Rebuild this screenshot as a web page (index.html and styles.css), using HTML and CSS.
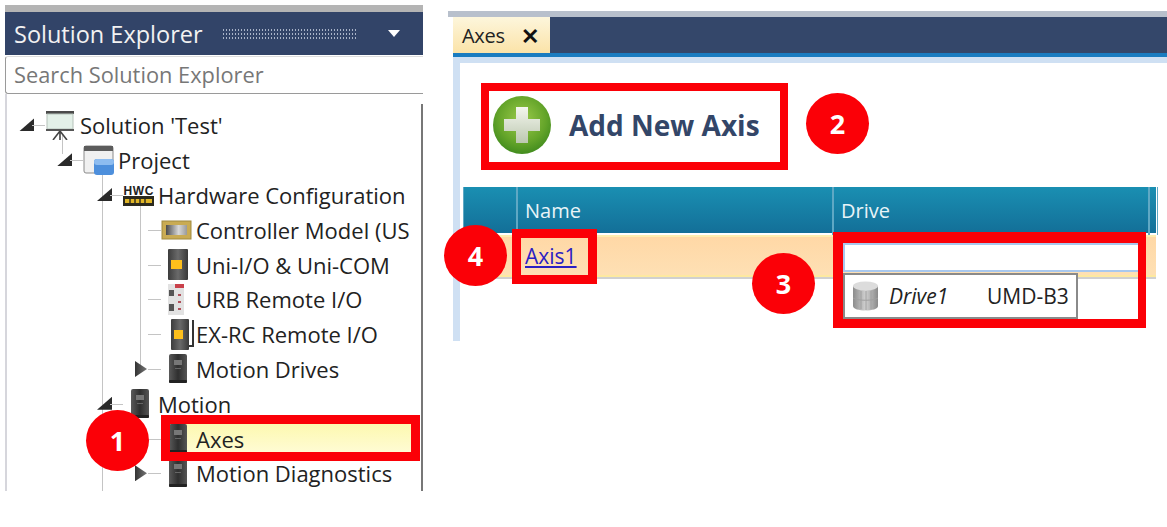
FILE: index.html
```html
<!DOCTYPE html>
<html lang="en">
<head>
  <meta charset="UTF-8" />
  <meta name="viewport" content="width=device-width, initial-scale=1.0" />
  <title>Add New Axis</title>
  <link rel="stylesheet" href="styles.css">
</head>
<body>
  <svg class="defs" width="0" height="0">
    <defs>
      <linearGradient id="driveBody" x1="0" x2="1" y1="0" y2="0">
        <stop offset="0" stop-color="#5a5a5a" />
        <stop offset="0.5" stop-color="#2f2f2f" />
        <stop offset="1" stop-color="#555" />
      </linearGradient>
      <linearGradient id="ioBody" x1="0" x2="1" y1="0" y2="0">
        <stop offset="0" stop-color="#3c3c3c" />
        <stop offset="0.5" stop-color="#6a6a6a" />
        <stop offset="1" stop-color="#383838" />
      </linearGradient>
      <linearGradient id="ctrlBody" x1="0" x2="1" y1="0" y2="0">
        <stop offset="0" stop-color="#4a4a4a" />
        <stop offset="0.6" stop-color="#d8d8d8" />
        <stop offset="1" stop-color="#9a9a9a" />
      </linearGradient>
      <linearGradient id="cylBody" x1="0" x2="1" y1="0" y2="0">
        <stop offset="0" stop-color="#8c8c8c" />
        <stop offset="0.5" stop-color="#d0d0d0" />
        <stop offset="1" stop-color="#8a8a8a" />
      </linearGradient>
      <radialGradient id="plusBall" cx="0.5" cy="0.4" r="0.62">
        <stop offset="0" stop-color="#9ccb4a" />
        <stop offset="0.65" stop-color="#65a52a" />
        <stop offset="1" stop-color="#3f8a1d" />
      </radialGradient>
      <linearGradient id="plusMark" x1="0" x2="0" y1="0" y2="1">
        <stop offset="0" stop-color="#f4f6ee" />
        <stop offset="1" stop-color="#bcc8b0" />
      </linearGradient>
      <symbol id="drive" viewBox="0 0 20 30">
        <rect x="1" y="0" width="18" height="29" rx="2" fill="url(#driveBody)" />
        <rect x="1" y="26" width="18" height="3" rx="1" fill="#222" />
        <rect x="6" y="6" width="8" height="5" fill="#777" />
        <rect x="7" y="14" width="6" height="1" fill="#666" />
      </symbol>
      <symbol id="unio" viewBox="0 0 20 31">
        <rect x="0" y="0" width="20" height="31" rx="1" fill="url(#ioBody)" />
        <rect x="3" y="11" width="11" height="9" fill="#fdbf1c" />
      </symbol>
    </defs>
  </svg>

  <div class="page">
    <section class="explorer">
      <div class="explorer-title">
        <span class="explorer-name">Solution Explorer</span>
        <span class="gripper"></span>
        <span class="caret"></span>
      </div>
      <div class="search">Search Solution Explorer</div>
      <ul class="tree">
        <li class="guide guide-a"></li>
        <li class="guide guide-b"></li>
        <li class="guide guide-c"></li>
        <li class="row level-0">
          <span class="exp open"></span>
          <span class="ico">
            <svg width="30" height="30" viewBox="0 0 30 30">
              <rect x="1" y="1" width="28" height="3" fill="#4a4a4a" />
              <rect x="2" y="4" width="26" height="15" fill="#e3f0e8" stroke="#b5c2ba" />
              <rect x="1" y="19" width="28" height="2" fill="#555" />
              <path d="M15 21 L8 30 M15 21 V30 M15 21 L22 30" stroke="#444" stroke-width="1.6" fill="none" />
            </svg>
          </span>
          <span class="label">Solution 'Test'</span>
        </li>
        <li class="row level-1">
          <span class="exp open"></span>
          <span class="ico">
            <svg width="31" height="30" viewBox="0 0 31 30">
              <rect x="1" y="1" width="29" height="27" rx="2" fill="#f0f0f0" stroke="#8a8a8a" />
              <rect x="1" y="1" width="29" height="5" fill="#5c5c5c" />
              <rect x="11" y="14" width="20" height="16" rx="3" fill="#4d8fdc" />
              <rect x="11" y="14" width="20" height="6" rx="3" fill="#8dbcf0" />
            </svg>
          </span>
          <span class="label">Project</span>
        </li>
        <li class="row level-2">
          <span class="exp open"></span>
          <span class="ico">
            <svg width="31" height="22" viewBox="0 0 31 22">
              <text class="hwc-text" x="15.5" y="11" text-anchor="middle" textLength="30">HWC</text>
              <rect x="0" y="12" width="31" height="10" fill="#2c2a1e" />
              <path d="M2 15h27v4H2z" fill="#e0b526" />
              <path d="M7 15v4M12 15v4M17 15v4M22 15v4" stroke="#2c2a1e" stroke-width="1.4" />
            </svg>
          </span>
          <span class="label">Hardware Configuration</span>
        </li>
        <li class="row level-3">
          <span class="exp"></span>
          <span class="ico">
            <svg width="31" height="20" viewBox="0 0 31 20">
              <rect x="1" y="1" width="29" height="18" fill="#c9ab53" stroke="#a08a40" />
              <rect x="5" y="5" width="21" height="10" fill="url(#ctrlBody)" />
            </svg>
          </span>
          <span class="label">Controller Model (US</span>
        </li>
        <li class="row level-3">
          <span class="exp"></span>
          <span class="ico ico-narrow"><svg width="20" height="31"><use href="#unio" /></svg></span>
          <span class="label">Uni-I/O &amp; Uni-COM</span>
        </li>
        <li class="row level-3">
          <span class="exp"></span>
          <span class="ico ico-narrow">
            <svg width="16" height="31" viewBox="0 0 16 31">
              <rect x="0" y="0" width="16" height="31" fill="#e2e2e2" />
              <path d="M7 0h9v4H7z" fill="#c9404a" />
              <rect x="1" y="6" width="5" height="6" fill="#555" />
              <rect x="1" y="20" width="5" height="7" fill="#555" />
              <path d="M10 10h3v2h-3zM10 17h3v2h-3zM10 24h3v2h-3z" fill="#b0505a" />
            </svg>
          </span>
          <span class="label">URB Remote I/O</span>
        </li>
        <li class="row level-3">
          <span class="exp"></span>
          <span class="ico ico-exrc">
            <svg width="24" height="31" viewBox="0 0 24 31">
              <rect x="0" y="0" width="18" height="31" rx="1" fill="url(#ioBody)" />
              <rect x="3" y="11" width="9" height="9" fill="#fdbf1c" />
              <path d="M22 1v26h-4" stroke="#333" stroke-width="2" fill="none" />
            </svg>
          </span>
          <span class="label">EX-RC Remote I/O</span>
        </li>
        <li class="row level-3">
          <span class="exp closed"></span>
          <span class="ico ico-narrow"><svg width="20" height="30"><use href="#drive" /></svg></span>
          <span class="label">Motion Drives</span>
        </li>
        <li class="row level-2">
          <span class="exp open"></span>
          <span class="ico ico-narrow"><svg width="20" height="30"><use href="#drive" /></svg></span>
          <span class="label">Motion</span>
        </li>
        <li class="row level-3 selected">
          <span class="exp"></span>
          <span class="sel">
            <span class="ico ico-narrow"><svg width="20" height="30"><use href="#drive" /></svg></span>
            <span class="label">Axes</span>
          </span>
        </li>
        <li class="row level-3">
          <span class="exp closed"></span>
          <span class="ico ico-narrow"><svg width="20" height="30"><use href="#drive" /></svg></span>
          <span class="label">Motion Diagnostics</span>
        </li>
      </ul>
    </section>

    <section class="editor">
      <div class="tabbar">
        <div class="tab"><span>Axes</span><span class="tab-close">✕</span></div>
      </div>
      <div class="editor-body">
        <div class="toolbar">
          <svg width="58" height="58" viewBox="0 0 58 58">
            <circle cx="29" cy="29" r="29" fill="url(#plusBall)" />
            <path d="M23 11h12v12h12v12H35v12H23V35H11V23h12z" fill="url(#plusMark)" />
          </svg>
          <span class="add-text">Add New Axis</span>
        </div>
        <div class="grid-head">
          <div class="cell-head"></div>
          <div class="cell-head">Name</div>
          <div class="cell-head">Drive</div>
          <div class="cell-head"></div>
        </div>
        <div class="grid-row">
          <div></div>
          <div class="cell"><a href="#" class="axis-link">Axis1</a></div>
          <div class="cell cell-drive"></div>
          <div></div>
        </div>
      </div>
    </section>
  </div>

  <!-- red annotations on top of the screenshot -->
  <div class="mark mark-1"></div>
  <div class="mark mark-2"></div>
  <div class="mark mark-3">
    <div class="drive-input"></div>
    <div class="drive-list">
      <svg width="27" height="30" viewBox="0 0 27 30">
        <path d="M1 5v20c0 6 25 6 25 0V5z" fill="url(#cylBody)" />
        <ellipse cx="13.5" cy="5" rx="12.5" ry="4.5" fill="#dcdcdc" />
        <path d="M9 10v18M14 10v19M19 10v18M1 17c4 3 21 3 25 0" stroke="#a0a0a0" fill="none" />
      </svg>
      <span class="drive-name">Drive1</span>
      <span class="drive-model">UMD-B3</span>
    </div>
  </div>
  <div class="mark mark-4"></div>
  <div class="badge badge-1">1</div>
  <div class="badge badge-2">2</div>
  <div class="badge badge-3">3</div>
  <div class="badge badge-4">4</div>
</body>
</html>
```

FILE: styles.css
```css
body {
  margin: 0;
  background: white;
  color: #222;
  font-family: "Open Sans", "Noto Sans", sans-serif;
  height: 527px;
  overflow: hidden;
  position: relative;
}
.defs {
  position: absolute;
}
.page {
  display: flex;
  align-items: flex-start;
  gap: 25px;
  padding: 5px 0 0 5px;
}

/* solution explorer */
.explorer {
  width: 418px;
  flex: none;
  border-top: 7px solid #b4b4b4;
}
.explorer-title {
  display: flex;
  align-items: center;
  height: 43px;
  background: #324468;
  color: #f2f2f2;
  padding-left: 9px;
}
.explorer-name {
  font-size: 23.5px;
  width: 208px;
  flex: none;
  white-space: nowrap;
}
.gripper {
  width: 134px;
  height: 12px;
  flex: none;
  background-image: radial-gradient(circle, #aab4c8 0.8px, transparent 1px);
  background-size: 3px 4px;
}
.caret {
  margin-left: 32px;
  border-left: 6px solid transparent;
  border-right: 6px solid transparent;
  border-top: 7px solid white;
}
.search {
  height: 38px;
  margin-top: 1px;
  box-sizing: border-box;
  border: 1px solid #9a9a9a;
  border-top-color: #ddd;
  border-right: none;
  border-radius: 3px 0 0 3px;
  padding-left: 8px;
  font-size: 21.8px;
  line-height: 36px;
  color: #777;
  white-space: nowrap;
}
.tree {
  list-style: none;
  margin: 0;
  padding: 14px 0 0;
  height: 397px;
  box-sizing: border-box;
  position: relative;
  overflow: hidden;
  border-left: 2px solid #d6d6dc;
  background: linear-gradient(#777, #777) right 10px / 2px 100% no-repeat;
}
.guide {
  position: absolute;
  width: 1px;
  background: #c4c4c4;
}
.guide-a {
  left: 55px;
  top: 40px;
  height: 20px;
}
.guide-b {
  left: 95px;
  top: 74px;
  height: 323px;
}
.guide-c {
  left: 133px;
  top: 112px;
  height: 160px;
}
.row {
  display: flex;
  align-items: center;
  height: 34.8px;
  position: relative;
}
.level-0 { padding-left: 12px; }
.level-1 { padding-left: 50px; }
.level-2 { padding-left: 90px; }
.level-3 { padding-left: 128px; }
.exp {
  width: 26px;
  height: 16px;
  flex: none;
  position: relative;
}
.exp::after {
  content: "";
  position: absolute;
  left: 13px;
  right: 0;
  top: 8px;
  height: 1px;
  background: #c4c4c4;
}
.exp.open::before {
  content: "";
  position: absolute;
  left: 0;
  top: 1px;
  width: 15px;
  height: 13px;
  background: #2a2a2a;
  clip-path: polygon(100% 0, 100% 100%, 0 100%);
}
.exp.closed::before {
  content: "";
  position: absolute;
  left: 0;
  top: 0;
  width: 12px;
  height: 16px;
  background: linear-gradient(to right, #333, #777);
  clip-path: polygon(0 0, 100% 50%, 0 100%);
}
.ico {
  width: 35px;
  flex: none;
  display: flex;
  align-items: center;
}
.ico svg {
  display: block;
}
.ico-narrow {
  padding-left: 7px;
  width: 28px;
}
.ico-exrc {
  padding-left: 10px;
  width: 25px;
}
.label {
  font-size: 22px;
  white-space: nowrap;
}
.sel {
  display: flex;
  align-items: center;
  flex: 1;
  height: 30px;
  margin-right: 8px;
  background: linear-gradient(#fdf8b0, #fffcd6);
}
.hwc-text {
  font-family: "Liberation Sans", sans-serif;
  font-size: 12px;
  font-weight: bold;
  fill: #222;
}

/* axes editor */
.editor {
  flex: 1;
  margin-top: 6px;
  border-top: 6px solid #b8c0cc;
}
.tabbar {
  margin-left: 5px;
  height: 36px;
  background: #34476a;
  border-bottom: 4px solid #1a7cc0;
  display: flex;
}
.tab {
  width: 97px;
  box-sizing: border-box;
  padding-left: 9px;
  display: flex;
  align-items: center;
  gap: 16px;
  font-size: 20px;
  letter-spacing: -0.3px;
  background: linear-gradient(#fdf6dc, #fbe3a8);
}
.tab-close {
  font-size: 22px;
  font-weight: bold;
  color: #111;
}
.editor-body {
  margin-left: 5px;
  height: 284px;
  box-sizing: border-box;
  border-left: 7px solid #cfe0f3;
  border-top: 6px solid #cfe0f3;
}
.toolbar {
  display: flex;
  align-items: center;
  gap: 18px;
  padding: 33px 0 0 33px;
  height: 91px;
  box-sizing: border-box;
}
.add-text {
  font-size: 28px;
  font-weight: bold;
  color: #334668;
  white-space: nowrap;
}
.grid-head,
.grid-row {
  display: grid;
  grid-template-columns: 54px 316px 316px 7px;
  width: 693px;
  margin: 33px 0 0 3px;
}
.grid-head {
  height: 46px;
  margin-top: 33px;
  background: linear-gradient(#1a8fb2, #136f98);
  color: #e8f4f8;
}
.cell-head {
  box-sizing: border-box;
  border-right: 1px solid #5fa8c4;
  border-left: 1px solid #5fa8c4;
  padding-left: 7px;
  font-size: 20px;
  line-height: 48px;
}
.grid-row {
  margin-top: 2px;
  height: 42px;
  background: linear-gradient(#ffd8a6, #fee0b4);
  border-top: 2px solid #fdeeb0;
  border-bottom: 2px solid #fde9a0;
  box-shadow: 0 2px 0 #d0d0d0;
  box-sizing: border-box;
}
.cell {
  padding-left: 8px;
  font-size: 21px;
  line-height: 38px;
}
.axis-link {
  color: #2a20c4;
}

/* annotations */
.mark {
  position: absolute;
  box-sizing: border-box;
  border: 8px solid #fb0007;
}
.mark-1 {
  left: 161px;
  top: 415px;
  width: 259px;
  height: 46px;
  border-width: 9px;
}
.mark-2 {
  left: 481px;
  top: 83px;
  width: 307px;
  height: 87px;
}
.mark-3 {
  left: 833px;
  top: 232px;
  width: 313px;
  height: 96px;
  border-width: 11px 8px 9px 10px;
}
.mark-4 {
  left: 512px;
  top: 229px;
  width: 85px;
  height: 55px;
  border-width: 9px;
}
.drive-input {
  height: 29px;
  box-sizing: border-box;
  background: white;
  border: 2px solid #a8c8ee;
  border-right: none;
}
.drive-list {
  width: 235px;
  height: 46px;
  margin-top: 1px;
  box-sizing: border-box;
  background: white;
  border: 2px solid #8a8a8a;
  display: flex;
  align-items: center;
  padding-left: 7px;
  font-size: 21px;
}
.drive-name {
  font-style: italic;
  margin-left: 10px;
  width: 98px;
  flex: none;
}
.badge {
  position: absolute;
  width: 63px;
  height: 61px;
  border-radius: 50%;
  background: #fb0007;
  color: white;
  font-size: 27px;
  font-weight: bold;
  display: flex;
  align-items: center;
  justify-content: center;
}
.badge-1 { left: 86px; top: 410px; }
.badge-2 { left: 806px; top: 93px; }
.badge-3 { left: 752px; top: 253px; }
.badge-4 { left: 444px; top: 225px; }
```
